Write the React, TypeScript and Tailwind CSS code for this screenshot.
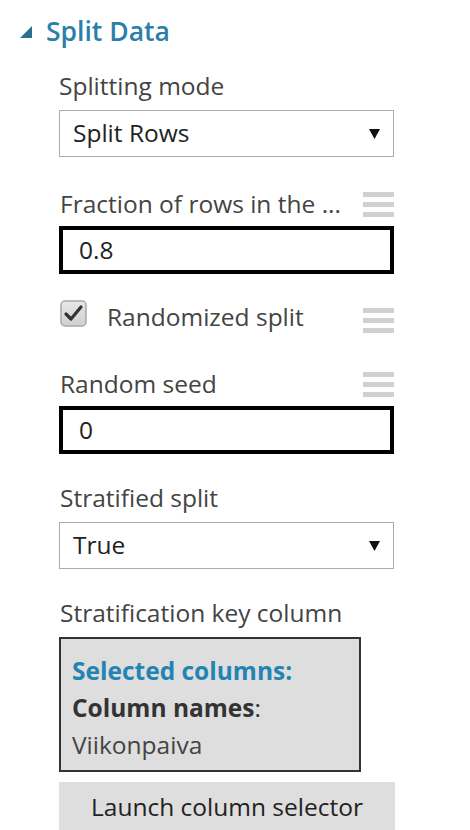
import React from "react";

const font = { fontFamily: '"Segoe UI", "Open Sans", "Noto Sans", sans-serif' };

function Handle() {
  return (
    <div className="flex h-[27px] w-[31px] flex-col justify-between py-[1px]">
      <div className="h-[5px] bg-[#d0d0d0]" />
      <div className="h-[5px] bg-[#d0d0d0]" />
      <div className="h-[5px] bg-[#d0d0d0]" />
    </div>
  );
}

function Select({ value }: { value: string }) {
  return (
    <div className="flex h-[47px] w-[335px] items-center justify-between border border-[#ababab] bg-white pl-[13px] pr-[13px] text-[24.5px] leading-none text-[#222]">
      <span>{value}</span>
      <svg width="11" height="10" viewBox="0 0 11 10">
        <polygon points="0,0 11,0 5.5,10" fill="#111" />
      </svg>
    </div>
  );
}

function TextBox({ value }: { value: string }) {
  return (
    <div className="flex h-[48px] w-[335px] items-center border-[4px] border-black bg-white pl-[16px] text-[24.5px] leading-none text-[#222]">
      {value}
    </div>
  );
}

export default function App() {
  return (
    <div className="min-h-[830px] w-[470px] overflow-hidden bg-white" style={font}>
      <div className="mt-[11px] flex h-[40px] items-center pl-[20px]">
        <svg width="12" height="12" viewBox="0 0 12 12" className="mt-[2px]">
          <polygon points="12,0 12,12 0,12" fill="#2d6f8e" />
        </svg>
        <span className="ml-[14px] text-[26.5px] leading-none font-semibold text-[#2a80aa]">Split Data</span>
      </div>

      <div className="flex flex-col pl-[59px] text-[24.5px] leading-none">
        <div className="mt-[20px] flex h-[30px] items-center text-[#444]">Splitting mode</div>
        <div className="mt-[9px]">
          <Select value="Split Rows" />
        </div>

        <div className="mt-[33px] flex h-[28px] w-[335px] items-center justify-between text-[#444]">
          <span className="pl-[1px]">Fraction of rows in the ...</span>
          <Handle />
        </div>
        <div className="mt-[8px]">
          <TextBox value="0.8" />
        </div>

        <div className="mt-[26px] flex h-[34px] w-[335px] items-start justify-between">
          <div className="flex items-start">
            <svg width="27" height="27" viewBox="0 0 27 27" className="ml-[1px]">
              <defs>
                <linearGradient id="cb" x1="0" y1="0" x2="0" y2="1">
                  <stop offset="0" stopColor="#e8e8e8" />
                  <stop offset="1" stopColor="#cfcfcf" />
                </linearGradient>
              </defs>
              <rect x="1" y="1" width="25" height="25" rx="4" fill="url(#cb)" stroke="#a8a8a8" strokeWidth="1.5" />
              <path d="M6 14 L11 19 L21 7" fill="none" stroke="#333" strokeWidth="3.2" strokeLinecap="round" strokeLinejoin="round" />
            </svg>
            <span className="ml-[20px] mt-[2px] leading-[30px] text-[#444]">Randomized split</span>
          </div>
          <div className="mt-[7px]">
            <Handle />
          </div>
        </div>

        <div className="mt-[36px] flex h-[28px] w-[335px] items-center justify-between text-[#444]">
          <span className="pl-[1px]">Random seed</span>
          <Handle />
        </div>
        <div className="mt-[8px]">
          <TextBox value="0" />
        </div>

        <div className="mt-[29px] flex h-[30px] items-center pl-[1px] text-[#444]">Stratified split</div>
        <div className="mt-[9px]">
          <Select value="True" />
        </div>

        <div className="mt-[29px] flex h-[30px] items-center pl-[1px] text-[#444]">Stratification key column</div>
        <div className="mt-[9px] h-[135px] w-[302px] border-2 border-[#333] bg-[#dedede] pl-[11px] pt-[13px] leading-[37px]">
          <div className="font-bold text-[#2384b4]">Selected columns:</div>
          <div className="text-[#333]">
            <span className="font-bold">Column names</span>:
          </div>
          <div className="text-[#444]">Viikonpaiva</div>
        </div>

        <div className="mt-[10px] flex h-[50px] w-[336px] items-center justify-center bg-[#dedede] text-[#222]">
          Launch column selector
        </div>
      </div>
    </div>
  );
}
